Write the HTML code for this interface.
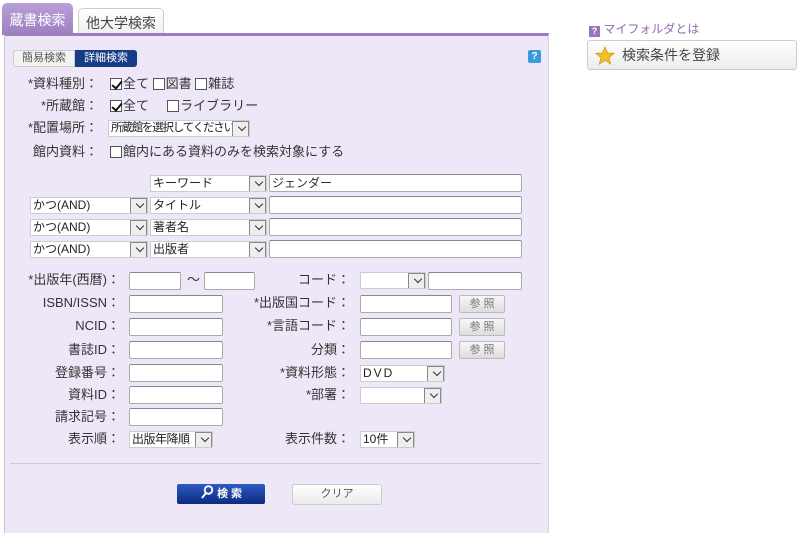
<!DOCTYPE html>
<html><head><meta charset="utf-8"><style>
*{box-sizing:border-box;margin:0;padding:0}
body{width:800px;height:532px;background:#fff;position:relative;overflow:hidden;font-family:"Liberation Sans","Noto Sans CJK JP",sans-serif;font-size:13px;color:#333}
.a{position:absolute;white-space:nowrap}
.l{position:absolute;white-space:nowrap;text-align:right;line-height:16px}
.in{position:absolute;height:18px;background:#fff;border:1px solid #aaa;border-top-color:#888;border-radius:2px}
.sel{position:absolute;height:17px;background:#fff;border:1px solid #ccc;font-size:12px;line-height:15px;padding-left:2px;color:#222;overflow:hidden;white-space:nowrap}
.sel::after{content:"";position:absolute;right:0;top:0;width:15px;height:15px;background:#eee;border:1px solid #888}
.sel i{position:absolute;right:4px;top:3px;width:6px;height:6px;border-right:1.5px solid #333;border-bottom:1.5px solid #333;transform:rotate(45deg);z-index:2}
.cb{display:inline-block;width:12px;height:12px;border:1px solid #555;background:#fff;vertical-align:-2px;margin-right:1px;position:relative}
.ck::after{content:"";position:absolute;left:3px;top:0;width:4px;height:8px;border-right:2px solid #111;border-bottom:2px solid #111;transform:rotate(40deg)}
.ref{position:absolute;width:46px;height:18px;background:linear-gradient(#f8f8f8,#ddd);border:1px solid #bbb;border-radius:2px;font-size:11px;color:#777;text-align:center;line-height:16px}
</style></head><body>
<div class="a" style="left:2px;top:3px;width:71px;height:32px;background:linear-gradient(#b9a0d6,#9c7fc0);border-radius:5px 5px 0 0;color:#fff;font-size:14px;line-height:34px;text-align:center">蔵書検索</div>
<div class="a" style="left:78px;top:8px;width:86px;height:27px;background:linear-gradient(#fff,#eee);border:1px solid #ccc;border-bottom:none;border-radius:5px 5px 0 0;color:#444;font-size:14px;line-height:28px;text-align:center">他大学検索</div>
<div class="a" style="left:4px;top:33px;width:545px;height:500px;background:#ede7f7;border-top:3px solid #9a7cbf;border-left:1px solid #c8c0d4;border-right:1px solid #d8d0e4"></div>
<div class="a" style="left:13px;top:50px;width:62px;height:17px;background:#f3f3f3;border:1px solid #ccc;border-radius:3px 0 0 3px;font-size:11px;color:#555;text-align:center;line-height:15px">簡易検索</div>
<div class="a" style="left:75px;top:50px;width:62px;height:17px;background:#173b86;border-radius:0 3px 3px 0;font-size:11px;color:#fff;text-align:center;line-height:17px">詳細検索</div>
<div class="a" style="left:528px;top:50px;width:13px;height:13px;background:#3b9ad8;color:#fff;font-size:10px;font-weight:bold;text-align:center;line-height:13px;border-radius:2px">?</div>

<div class="l" style="right:702px;top:76px">*資料種別：</div>
<div class="a" style="left:110px;top:76px;line-height:16px"><span class="cb ck"></span>全て <span class="cb"></span>図書 <span class="cb"></span>雑誌</div>
<div class="l" style="right:702px;top:98px">*所蔵館：</div>
<div class="a" style="left:110px;top:98px;line-height:16px"><span class="cb ck"></span>全て &nbsp;&nbsp;&nbsp;&nbsp;<span class="cb"></span>ライブラリー</div>
<div class="l" style="right:702px;top:120px">*配置場所：</div>
<div class="sel" style="left:108px;top:120px;width:142px;letter-spacing:-1.2px;font-size:11.5px">所蔵館を選択してください<i></i></div>
<div class="l" style="right:702px;top:144px">館内資料：</div>
<div class="a" style="left:110px;top:144px;line-height:16px"><span class="cb"></span>館内にある資料のみを検索対象にする</div>

<div class="sel" style="left:150px;top:175px;width:117px">キーワード<i></i></div>
<div class="in" style="left:269px;top:174px;width:253px;font-size:12px;line-height:16px;padding-left:2px">ジェンダー</div>
<div class="sel" style="left:30px;top:197px;width:118px">かつ(AND)<i></i></div>
<div class="sel" style="left:150px;top:197px;width:117px">タイトル<i></i></div>
<div class="in" style="left:269px;top:196px;width:253px"></div>
<div class="sel" style="left:30px;top:219px;width:118px">かつ(AND)<i></i></div>
<div class="sel" style="left:150px;top:219px;width:117px">著者名<i></i></div>
<div class="in" style="left:269px;top:218px;width:253px"></div>
<div class="sel" style="left:30px;top:241px;width:118px">かつ(AND)<i></i></div>
<div class="sel" style="left:150px;top:241px;width:117px">出版者<i></i></div>
<div class="in" style="left:269px;top:240px;width:253px"></div>

<div class="l" style="right:680px;top:272px">*出版年(西暦)：</div>
<div class="in" style="left:129px;top:272px;width:52px"></div>
<div class="a" style="left:187px;top:272px;line-height:16px">～</div>
<div class="in" style="left:204px;top:272px;width:51px"></div>
<div class="l" style="right:450px;top:272px">コード：</div>
<div class="sel" style="left:360px;top:272px;width:66px"><i></i></div>
<div class="in" style="left:428px;top:272px;width:94px"></div>

<div class="l" style="right:680px;top:295px">ISBN/ISSN：</div>
<div class="in" style="left:129px;top:295px;width:94px"></div>
<div class="l" style="right:450px;top:295px">*出版国コード：</div>
<div class="in" style="left:360px;top:295px;width:92px"></div>
<div class="ref" style="left:459px;top:295px">参 照</div>

<div class="l" style="right:680px;top:318px">NCID：</div>
<div class="in" style="left:129px;top:318px;width:94px"></div>
<div class="l" style="right:450px;top:318px">*言語コード：</div>
<div class="in" style="left:360px;top:318px;width:92px"></div>
<div class="ref" style="left:459px;top:318px">参 照</div>

<div class="l" style="right:680px;top:342px">書誌ID：</div>
<div class="in" style="left:129px;top:341px;width:94px"></div>
<div class="l" style="right:450px;top:342px">分類：</div>
<div class="in" style="left:360px;top:341px;width:92px"></div>
<div class="ref" style="left:459px;top:341px">参 照</div>

<div class="l" style="right:680px;top:365px">登録番号：</div>
<div class="in" style="left:129px;top:364px;width:94px"></div>
<div class="l" style="right:450px;top:365px">*資料形態：</div>
<div class="sel" style="left:360px;top:365px;width:85px;letter-spacing:2px">DVD<i></i></div>

<div class="l" style="right:680px;top:387px">資料ID：</div>
<div class="in" style="left:129px;top:386px;width:94px"></div>
<div class="l" style="right:450px;top:387px">*部署：</div>
<div class="sel" style="left:360px;top:387px;width:82px"><i></i></div>

<div class="l" style="right:680px;top:409px">請求記号：</div>
<div class="in" style="left:129px;top:408px;width:94px"></div>

<div class="l" style="right:680px;top:431px">表示順：</div>
<div class="sel" style="left:129px;top:431px;width:84px;letter-spacing:-0.5px">出版年降順<i></i></div>
<div class="l" style="right:450px;top:431px">表示件数：</div>
<div class="sel" style="left:360px;top:431px;width:55px">10件<i></i></div>

<div class="a" style="left:10px;top:463px;width:531px;height:1px;background:#cfc8da"></div>
<div class="a" style="left:177px;top:484px;width:88px;height:20px;background:linear-gradient(#2e5bc0,#0c2a80);border-radius:2px;color:#fff;font-size:11px;font-weight:bold;line-height:20px;text-align:center">
<svg width="14" height="15" viewBox="0 0 14 15" style="vertical-align:-3px"><circle cx="8.5" cy="5" r="3.8" fill="none" stroke="#fff" stroke-width="1.8"/><path d="M6 8 L2 13" stroke="#fff" stroke-width="2"/></svg> 検 索</div>
<div class="a" style="left:292px;top:484px;width:90px;height:21px;background:linear-gradient(#fff,#ececec);border:1px solid #ccc;border-radius:3px;color:#555;font-size:11px;line-height:19px;text-align:center">クリア</div>

<div class="a" style="left:589px;top:22px;font-size:12px;color:#8d6ab3;line-height:14px"><span style="display:inline-block;width:11px;height:11px;background:#9a76c0;color:#fff;font-size:9px;font-weight:bold;text-align:center;line-height:11px;vertical-align:-1px">?</span> マイフォルダとは</div>
<div class="a" style="left:587px;top:40px;width:210px;height:30px;background:linear-gradient(#fff,#ececec);border:1px solid #ccc;border-radius:3px;font-size:14px;color:#444;line-height:28px;padding-left:34px">検索条件を登録</div>
<svg class="a" style="left:595px;top:46px" width="20" height="19" viewBox="0 0 20 19"><path d="M10 1 L12.6 7 L19 7.4 L14 11.6 L15.7 18 L10 14.4 L4.3 18 L6 11.6 L1 7.4 L7.4 7 Z" fill="#f4c028" stroke="#d59a10" stroke-width="0.8"/></svg>
</body></html>
